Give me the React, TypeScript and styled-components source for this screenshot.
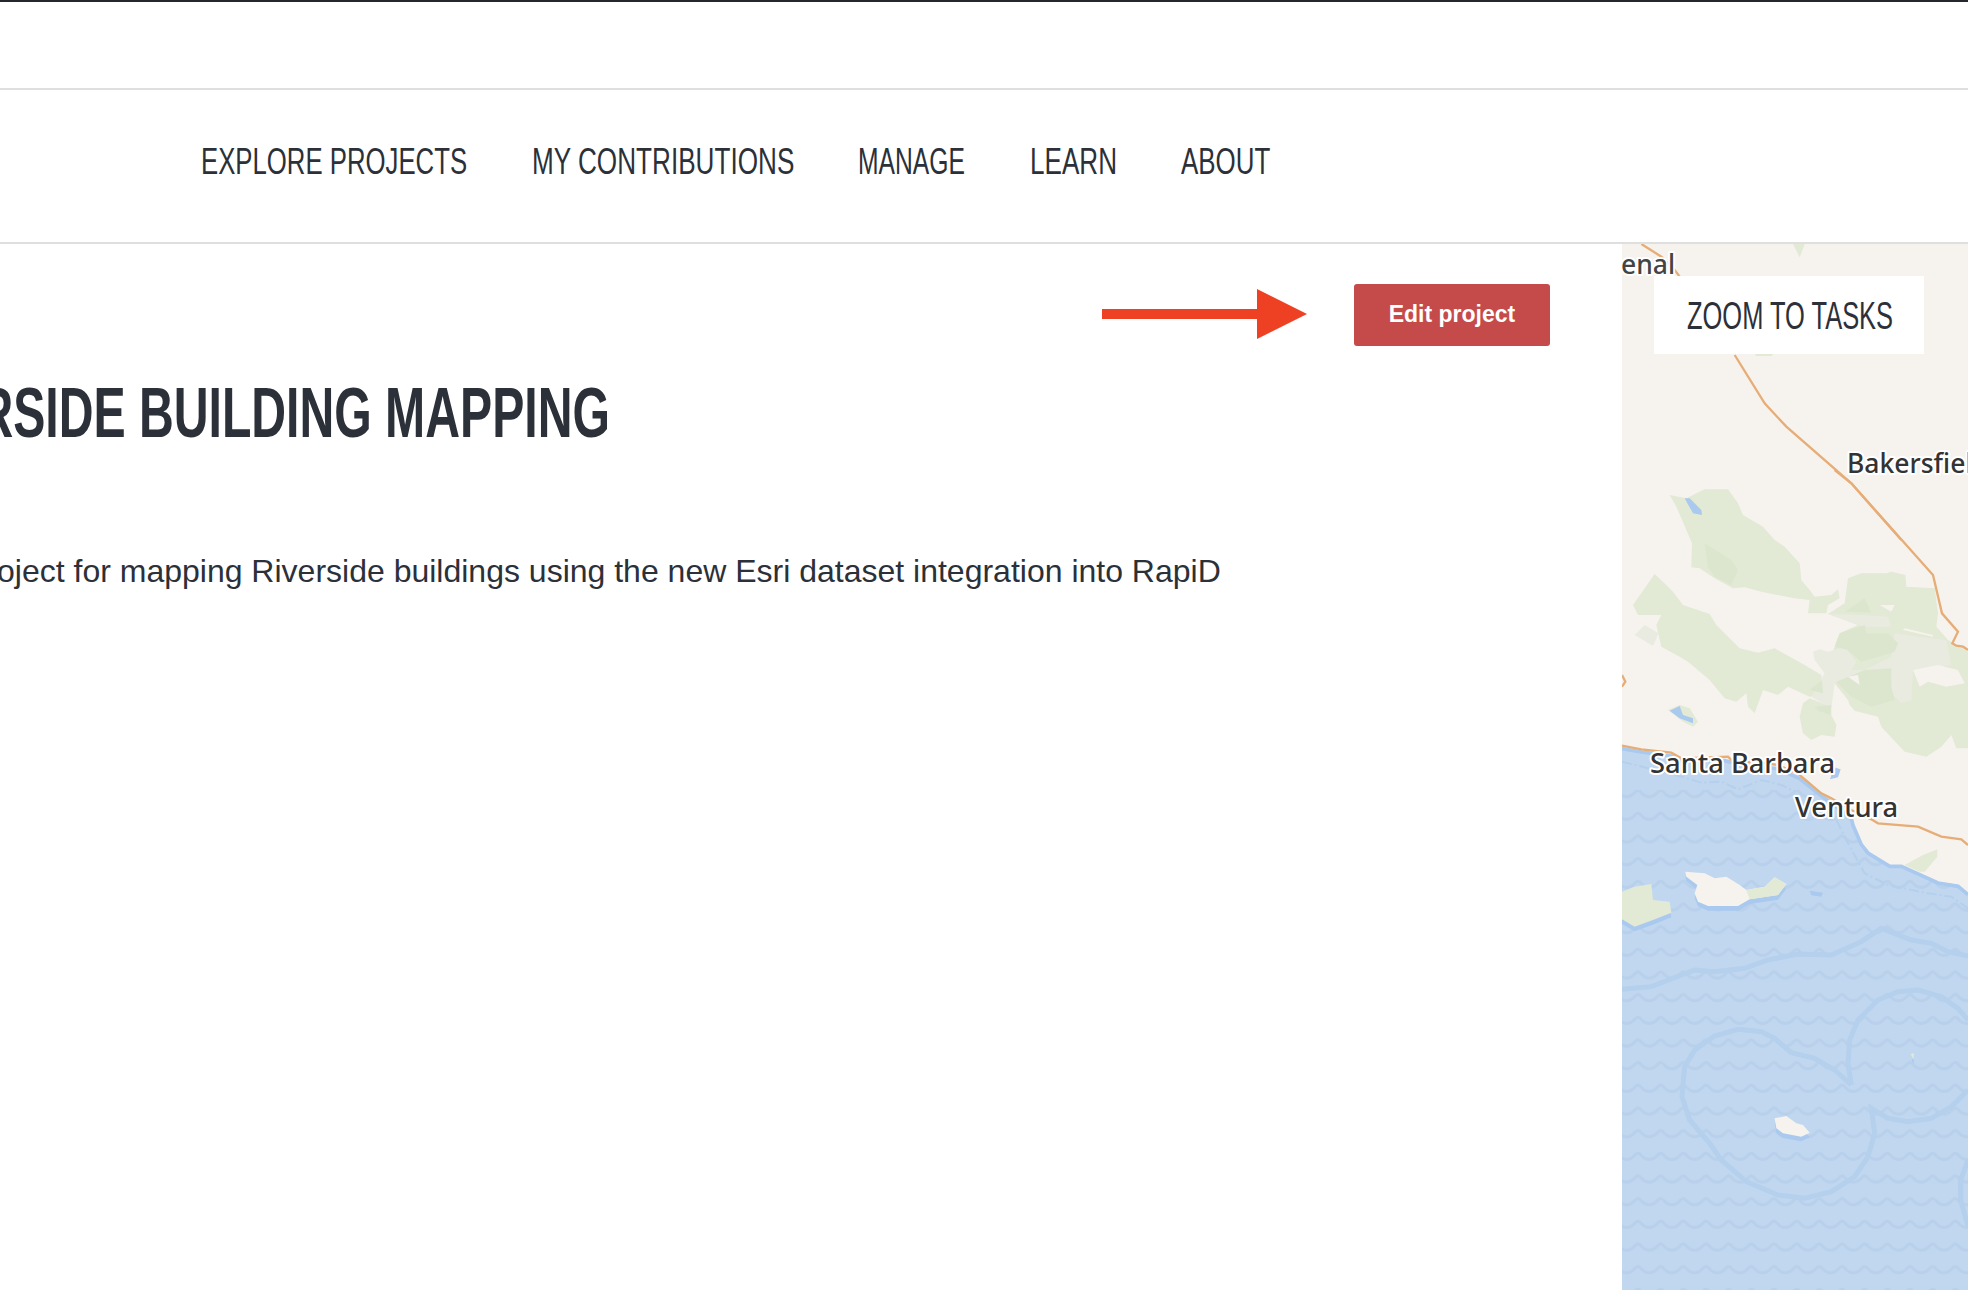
import React from "react";
import styled, { createGlobalStyle } from "styled-components";

const Global = createGlobalStyle`
  html, body { margin: 0; padding: 0; background: #fff; }
  body { font-family: "Liberation Sans", Arial, sans-serif; color: #2c3038; }
`;

const narrow = `"Liberation Sans Narrow", "Liberation Sans", sans-serif`;

const Page = styled.div`
  width: 1968px;
  height: 1290px;
  overflow: hidden;
  display: flex;
  flex-direction: column;
`;

const TopBar = styled.div`
  height: 86px;
  flex: none;
  border-top: 2px solid #24272c;
  border-bottom: 2px solid #dfdfdf;
`;

const NavBar = styled.nav`
  height: 152px;
  flex: none;
  display: flex;
  align-items: center;
  gap: 64.5px;
  padding-left: 201px;
  border-bottom: 2px solid #dfdfdf;
`;

const NavItem = styled.a<{ $width: number; $squeeze: number }>`
  width: ${({ $width }) => $width}px;
  font-family: ${narrow};
  font-size: 36px;
  line-height: 40px;
  color: #2c3038;
  white-space: nowrap;
  transform: scaleX(${({ $squeeze }) => $squeeze});
  transform-origin: left center;
  margin-top: -8px;
`;

const Body = styled.div`
  flex: 1;
  display: flex;
  min-height: 0;
`;

const Content = styled.main`
  width: 1622px;
  flex: none;
  overflow: hidden;
`;

const ActionRow = styled.div`
  display: flex;
  justify-content: flex-end;
  align-items: center;
  gap: 47px;
  padding: 40px 72px 0 0;
`;

const Arrow = styled.svg`
  display: block;
  margin-bottom: 2px;
`;

const EditButton = styled.button`
  width: 196px;
  height: 62px;
  border: 0;
  border-radius: 3px;
  background: #c54b4b;
  color: #fff;
  font-family: "Liberation Sans", Arial, sans-serif;
  font-weight: 700;
  font-size: 23px;
  padding: 0 0 2px;
`;

const Title = styled.h1`
  margin: 27px 0 0 -134px;
  font-family: ${narrow};
  font-weight: 700;
  font-size: 70px;
  line-height: 80px;
  color: #2c3038;
  white-space: nowrap;
  transform: scaleX(0.688);
  transform-origin: left center;
`;

const Description = styled.p`
  margin: 98px 0 0 -35px;
  font-size: 32px;
  line-height: 40px;
  color: #2c3038;
  white-space: nowrap;
`;

const MapPanel = styled.aside`
  flex: 1;
  position: relative;
  background: #f6f3ee;
  overflow: hidden;
`;

const MapDrawing = styled.svg`
  display: block;
  width: 346px;
  height: 1046px;
`;

const ZoomCard = styled.button`
  position: absolute;
  left: 32px;
  top: 32px;
  width: 270px;
  height: 78px;
  border: 0;
  background: #fff;
  font-family: ${narrow};
  font-size: 38px;
  color: #2c3038;
  padding: 2px 0 0;
  text-align: left;
  white-space: nowrap;
`;

const ZoomLabel = styled.span`
  display: block;
  margin-left: 33px;
  transform: scaleX(0.67);
  transform-origin: left center;
`;

const MapLabel = styled.text<{ $size?: number; $color?: string }>`
  font-family: "Noto Sans", "Open Sans", sans-serif;
  font-size: ${({ $size }) => $size ?? 27.3}px;
  font-weight: 500;
  fill: ${({ $color }) => $color ?? "#333"};
  stroke: #fff;
  stroke-width: 4px;
  stroke-linejoin: round;
  paint-order: stroke;
`;

const LAND = "#f6f3ee";
const GREEN = "#e2e9d5";
const GREEN_DARK = "#dce6cf";
const GREEN_PALE = "#e9ebe0";
const WATER = "#c1d7ef";
const WATER_EDGE = "#a9c9ef";
const BOUNDARY = "#b4d0ed";
const ROAD = "#e6ad77";

const navItems: [string, number, number][] = [
  ["EXPLORE PROJECTS", 266, 0.715],
  ["MY CONTRIBUTIONS", 262, 0.726],
  ["MANAGE", 107, 0.685],
  ["LEARN", 87, 0.725],
  ["ABOUT", 89, 0.72],
];

// traced in 3x crop coordinates, so each group scales down from its crop origin
const Crop = ({ y, children }: { y: number; children: React.ReactNode }) => (
  <g transform={`translate(1618 ${y}) scale(${1 / 3})`}>{children}</g>
);

const oceanCoast =
  "M12 52 L70 62 L160 74 L190 90 L320 88 L360 98 L480 112 L545 142 L610 194 L640 214 L700 262 L705 282 L730 340 L750 365 L815 405 L850 405 L960 455 L1020 465 L1050 490";
const oceanShape = `${oceanCoast} L1050 1700 L12 1700 Z`;

const santaCruz =
  "M202 425 L260 430 L290 445 L325 440 L365 465 L385 480 L440 470 L470 442 L505 462 L480 495 L395 508 L360 528 L270 528 L240 515 L230 490 L238 465 L205 440 Z";
const santaRosa = "M12 485 L50 470 L100 462 L105 510 L155 515 L160 548 L105 570 L50 590 L12 568 Z";
const catalina = "M470 565 L505 558 L535 580 L555 585 L575 608 L550 620 L495 610 L475 595 Z";

const MapArt = () => (
  <MapDrawing viewBox="1622 244 346 1046">
    <defs>
      <pattern id="waves" x="1638" y="946" width="22.67" height="22.67" patternUnits="userSpaceOnUse">
        <path
          d="M0 3 C3 3 4 9.5 11.33 9.5 C18.6 9.5 19.6 3 22.67 3"
          fill="none"
          stroke="#b8d0eb"
          strokeWidth="3"
        />
      </pattern>
      <clipPath id="oceanClip">
        <path transform="translate(1618 730) scale(0.33333)" d={oceanShape} />
      </clipPath>
    </defs>
    <rect x="1622" y="244" width="346" height="1046" fill={LAND} />

    <Crop y={470}>
      <g fill={GREEN}>
        <path d="M155 75 L205 85 L260 58 L330 58 L360 100 L375 135 L435 170 L470 210 L500 230 L545 280 L550 330 L575 360 L590 380 L640 375 L660 358 L665 385 L630 405 L625 430 L570 430 L575 390 L530 385 L430 365 L380 352 L345 355 L290 325 L245 295 L220 292 L222 220 L190 145 L175 110 Z" />
        <path d="M110 312 L145 345 L165 365 L195 405 L275 432 L295 465 L365 535 L420 548 L470 535 L560 585 L610 615 L615 670 L575 680 L510 650 L480 675 L435 660 L410 730 L390 710 L385 670 L355 695 L320 685 L275 630 L210 575 L185 560 L130 530 L115 465 L130 435 L60 435 L45 405 Z" />
        <path d="M680 400 L690 325 L730 310 L805 310 L820 305 L862 315 L865 350 L950 355 L960 430 L955 470 L990 510 L1050 545 L1050 835 L1015 835 L1000 795 L970 830 L925 860 L860 845 L790 770 L780 740 L700 720 L690 690 L650 640 L640 560 L650 530 L665 490 L720 465 L630 432 Z" />
        <path d="M555 700 L575 685 L640 710 L640 735 L655 765 L650 800 L610 795 L580 810 L555 790 L545 740 Z" />
      </g>
      <path d="M50 495 L80 465 L122 490 L105 528 Z" fill={GREEN_PALE} />
      <path
        d="M585 545 L605 538 L630 545 L680 530 L715 575 L700 600 L740 600 L820 560 L830 490 L900 500 L985 510 L1000 585 L885 600 L880 690 L850 700 L820 670 L720 650 L690 640 L650 640 L640 715 L580 680 L620 610 L590 570 Z"
        fill={GREEN_PALE}
      />
      <path d="M632 432 L730 435 L810 440 L820 470 L740 470 L720 465 Z" fill={GREEN_PALE} />
      <g fill={GREEN_DARK}>
        <path d="M650 530 L665 490 L740 465 L745 490 L810 490 L840 520 L830 545 L730 575 L690 540 Z" />
        <path d="M680 425 L740 385 L760 428 Z" />
        <path d="M260 220 L340 270 L360 300 L340 345 L290 320 L270 290 Z" />
        <path d="M655 635 L740 600 L820 595 L820 650 L830 690 L760 710 L700 680 Z" />
        <path d="M575 660 L612 630 L615 670 Z" />
        <path d="M590 710 L640 705 L638 735 L600 722 Z" />
      </g>
      <g fill={LAND}>
        <path d="M885 600 L960 585 L1020 600 L1040 640 L985 650 L930 635 L905 650 Z" />
        <path d="M690 620 L720 615 L725 645 Z" />
        <path d="M785 405 L830 405 L820 425 Z" />
        <path d="M855 480 L945 500 L945 495 L860 475 Z" />
        <path d="M640 715 L680 680 L690 700 L710 722 L650 742 Z" />
      </g>
      <path d="M200 85 L215 85 L250 120 L252 135 L225 130 Z" fill={WATER_EDGE} />
      <path d="M150 720 L185 705 L215 715 L240 755 L225 770 L195 755 Z" fill={GREEN} />
      <path d="M155 722 L185 708 L195 735 L225 745 L225 760 L185 745 Z" fill={WATER_EDGE} />
      <path d="M12 615 L22 635 L12 650" fill="none" stroke={ROAD} strokeWidth="7" />
      <path
        d="M650 0 L700 40 L945 315 L972 430 L1020 485 L1003 520 L1015 527 L1035 530 L1050 540"
        fill="none"
        stroke={ROAD}
        strokeWidth="7"
      />
    </Crop>

    <Crop y={240}>
      <path d="M70 12 L130 50 L170 90 L185 110 M350 345 L440 490 L505 560 L700 730 L850 900" fill="none" stroke={ROAD} strokeWidth="7" />
      <path d="M525 12 L560 12 L545 52 Z" fill={GREEN} />
      <path d="M408 340 L468 340 L460 348 L415 348 Z" fill={GREEN} />
    </Crop>

    <Crop y={730}>
      <path d={oceanShape} fill={WATER} />
    </Crop>
    <path d="M1622 790 H1968 V1290 H1622 Z" fill="url(#waves)" clipPath="url(#oceanClip)" />

    <Crop y={730}>
      <path d={oceanCoast} fill="none" stroke={WATER_EDGE} strokeWidth="11" transform="translate(0 4)" />
      <path
        d="M12 95 L190 140 L250 158 L310 155 L360 178 L430 150 L490 165 L530 185 M655 270 L690 340 L740 430 L810 465 L930 490 L1000 500 L1050 535"
        fill="none"
        stroke={BOUNDARY}
        strokeWidth="6"
        strokeDasharray="30 9 6 9"
      />
      <path
        d="M12 47 L70 58 L160 68 L190 85 L330 80 L345 95 L430 98 L480 105 L545 135 L610 190 L640 205 L700 240 L760 268 L780 280 L900 290 L970 320 L1030 328 L1050 345"
        fill="none"
        stroke={ROAD}
        strokeWidth="7"
      />
      <path d="M648 112 L668 118 L660 142 L636 148 Z" fill={WATER_EDGE} />
      <path d="M575 482 L615 488 L610 500 L580 496 Z" fill={WATER_EDGE} />
      <path d="M860 405 L915 375 L958 358 L958 380 L920 425 L905 425 Z" fill={GREEN} />
      <path d={santaCruz} fill={WATER_EDGE} transform="translate(0 14)" />
      <path d={santaRosa} fill={WATER_EDGE} transform="translate(0 14)" />
      <path d={santaCruz} fill={LAND} />
      <path d="M385 480 L440 470 L470 442 L505 462 L480 495 L395 508 Z" fill={GREEN} />
      <path d={santaRosa} fill={GREEN} />
    </Crop>

    <Crop y={930}>
      <g fill="none" stroke={BOUNDARY} strokeWidth="15">
        <path d="M12 178 L100 170 L230 120 L290 125 L380 115 L450 90 L540 72 L640 75 L730 35 L790 -5 L880 30 L940 40 L990 65 L1050 78" />
        <path d="M700 465 L650 420 L590 385 L520 368 L470 325 L430 305 L360 298 L290 318 L230 360 L200 410 L192 500 L215 570 L275 640 L310 690 L385 755 L480 795 L560 805 L640 785 L710 740 L750 680 L770 610 L760 535 L810 565 L870 575 L940 565 L1000 530 L1050 480" />
        <path d="M700 465 L690 400 L695 330 L720 270 L780 210 L840 185 L900 180 L970 200 L1020 235 L1050 270" />
        <path d="M1050 690 L1028 750 L1028 810 L1050 890" />
      </g>
      <path d={catalina} fill={WATER_EDGE} transform="translate(0 14)" />
      <path d={catalina} fill={LAND} />
      <path d="M878 372 L888 370 L886 388 Z" fill={GREEN} />
      <path d="M880 388 L888 388 L886 402 Z" fill={WATER_EDGE} />
    </Crop>

    <MapLabel x={1621} y={274} $size={26.5} $color="#444">enal</MapLabel>
    <MapLabel x={1847} y={473} $size={26.5}>Bakersfield</MapLabel>
    <MapLabel x={1650} y={773}>Santa Barbara</MapLabel>
    <MapLabel x={1795} y={817}>Ventura</MapLabel>
  </MapDrawing>
);

const App = () => (
  <Page>
    <Global />
    <TopBar />
    <NavBar>
      {navItems.map(([label, width, squeeze]) => (
        <NavItem key={label} $width={width} $squeeze={squeeze}>
          {label}
        </NavItem>
      ))}
    </NavBar>
    <Body>
      <Content>
        <ActionRow>
          <Arrow width="205" height="50" viewBox="0 0 205 50">
            <path d="M0 20 H155 V0 L205 25 L155 50 V30 H0 Z" fill="#ee4023" />
          </Arrow>
          <EditButton>Edit project</EditButton>
        </ActionRow>
        <Title>RIVERSIDE BUILDING MAPPING</Title>
        <Description>Project for mapping Riverside buildings using the new Esri dataset integration into RapiD</Description>
      </Content>
      <MapPanel>
        <MapArt />
        <ZoomCard>
          <ZoomLabel>ZOOM TO TASKS</ZoomLabel>
        </ZoomCard>
      </MapPanel>
    </Body>
  </Page>
);

export default App;
